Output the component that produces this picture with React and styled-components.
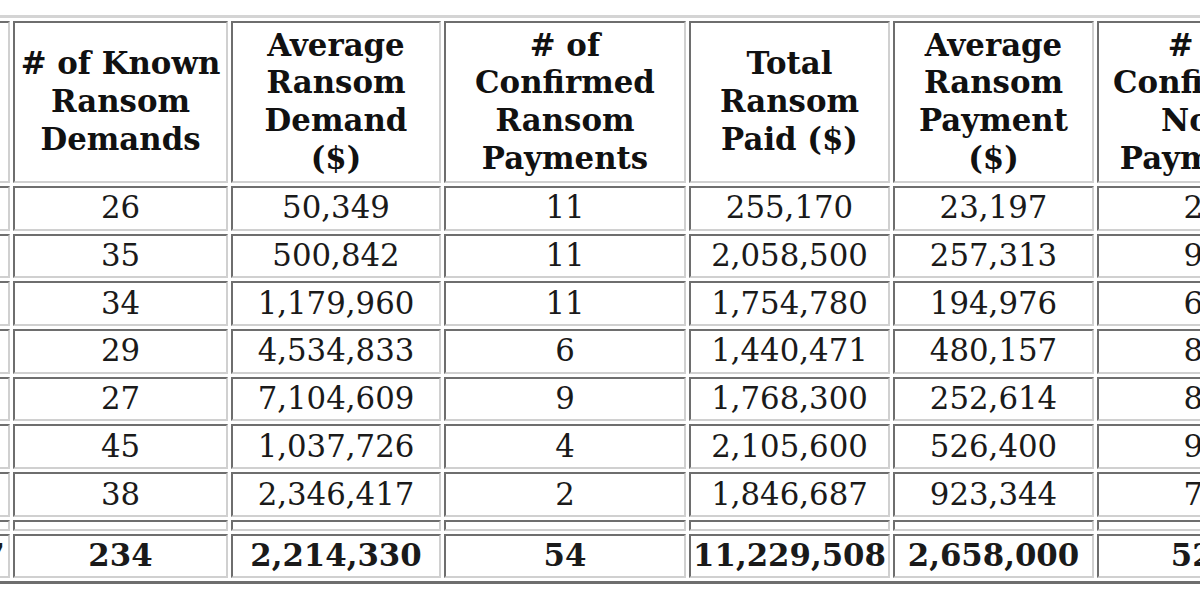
import React from "react";
import styled, { createGlobalStyle } from "styled-components";

const Global = createGlobalStyle`
  html, body { margin: 0; padding: 0; background: #ffffff; }
  body { font-family: "DejaVu Serif", "Liberation Serif", serif; color: #111111; }
`;

const Viewport = styled.div`
  width: 1200px;
  height: 600px;
  overflow: hidden;
  background: #ffffff;
`;

const DataTable = styled.table`
  margin: 15px 0 0 -103px;
  table-layout: fixed;
  width: 1418px;
  border-collapse: separate;
  border-spacing: 3px;
  border-style: solid;
  border-width: 3px;
  border-color: #d4d4d4 #6e6e6e #6e6e6e #d4d4d4;
  font-family: "DejaVu Serif", "Liberation Serif", serif;
  font-size: 30.8px;
  line-height: 37.7px;
`;

const HeadCell = styled.th`
  box-sizing: border-box;
  width: ${(p) => p.$w}px;
  padding: 3.5px 1.5px;
  border-style: solid;
  border-width: 2px;
  border-color: #6e6e6e #d0d0d0 #d0d0d0 #6e6e6e;
  font-weight: 700;
  text-align: center;
  vertical-align: middle;
  color: #111111;
`;

const Cell = styled.td`
  box-sizing: border-box;
  padding: 1.5px 1.5px;
  border-style: solid;
  border-width: 2px;
  border-color: #6e6e6e #d0d0d0 #d0d0d0 #6e6e6e;
  font-weight: ${(p) => (p.$bold ? 700 : 400)};
  text-align: center;
  vertical-align: middle;
  white-space: nowrap;
  color: #1a1a1a;
`;

const SpacerCell = styled.td`
  box-sizing: border-box;
  height: 11px;
  padding: 0;
  border-style: solid;
  border-width: 2px;
  border-color: #6e6e6e #d0d0d0 #d0d0d0 #6e6e6e;
  line-height: 0;
  font-size: 0;
`;

const headers = [
  { label: "Year", w: 107 },
  { label: "# of Known Ransom Demands", w: 215 },
  { label: "Average Ransom Demand ($)", w: 210 },
  { label: "# of Confirmed Ransom Payments", w: 242 },
  { label: "Total Ransom Paid ($)", w: 201 },
  { label: "Average Ransom Payment ($)", w: 201 },
  { label: "# of Confirmed Non-Payments", w: 212 },
];

const rows = [
  ["2015", "26", "50,349", "11", "255,170", "23,197", "28"],
  ["2016", "35", "500,842", "11", "2,058,500", "257,313", "93"],
  ["2017", "34", "1,179,960", "11", "1,754,780", "194,976", "67"],
  ["2018", "29", "4,534,833", "6", "1,440,471", "480,157", "81"],
  ["2019", "27", "7,104,609", "9", "1,768,300", "252,614", "84"],
  ["2020", "45", "1,037,726", "4", "2,105,600", "526,400", "95"],
  ["2021", "38", "2,346,417", "2", "1,846,687", "923,344", "75"],
];

const totals = ["1,457", "234", "2,214,330", "54", "11,229,508", "2,658,000", "523"];

export default function App() {
  return (
    <>
      <Global />
      <Viewport>
        <DataTable>
          <thead>
            <tr>
              {headers.map((h) => (
                <HeadCell key={h.label} $w={h.w}>
                  {h.label}
                </HeadCell>
              ))}
            </tr>
          </thead>
          <tbody>
            {rows.map((r) => (
              <tr key={r[0]}>
                {r.map((v, i) => (
                  <Cell key={i}>{v}</Cell>
                ))}
              </tr>
            ))}
            <tr>
              {headers.map((h) => (
                <SpacerCell key={h.label} />
              ))}
            </tr>
            <tr>
              {totals.map((v, i) => (
                <Cell key={i} $bold>
                  {v}
                </Cell>
              ))}
            </tr>
          </tbody>
        </DataTable>
      </Viewport>
    </>
  );
}
